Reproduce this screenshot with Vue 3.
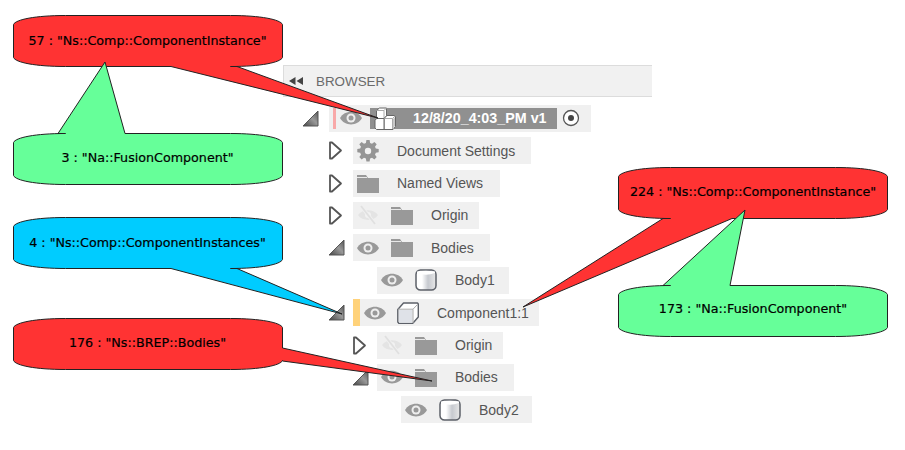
<script setup>
// callout outline, the tail is spliced in on the side it leaves from
function bubble(x, y, w, h, tail) {
  const r = x + w
  const b = y + h
  const top = tail.side === 'top' ? tail.pts.map((p) => `L${p}`).join(' ') : ''
  const right = tail.side === 'right' ? tail.pts.map((p) => `L${p}`).join(' ') : ''
  const bottom = tail.side === 'bottom' ? tail.pts.map((p) => `L${p}`).join(' ') : ''
  return `M${x},${y + 9} C${x + 2},${y + 4} ${x + 22},${y} ${x + 52},${y} ${top} L${r - 52},${y} C${r - 22},${y} ${r - 2},${y + 4} ${r},${y + 9} ${right} L${r},${b - 9} C${r - 2},${b - 4} ${r - 22},${b} ${r - 52},${b} ${bottom} L${x + 52},${b} C${x + 22},${b} ${x + 2},${b - 4} ${x},${b - 9} Z`
}

const callouts = [
  { d: bubble(13.5, 15.5, 269, 51, { side: 'bottom', pts: ['237,66.5', '378,118', '171,66.5'] }), fill: '#ff3333', label: '57 : "Ns::Comp::ComponentInstance"', x: 147.5, y: 45 },
  { d: bubble(13.5, 133.5, 269, 51, { side: 'top', pts: ['58,133.5', '105,62', '125,133.5'] }), fill: '#66ff99', label: '3 : "Na::FusionComponent"', x: 147.5, y: 162 },
  { d: bubble(13.5, 217.5, 269, 51, { side: 'bottom', pts: ['237,268.5', '342,314', '171,268.5'] }), fill: '#00ccff', label: '4 : "Ns::Comp::ComponentInstances"', x: 147.5, y: 247 },
  { d: bubble(13.5, 318.5, 269, 51, { side: 'right', pts: ['282.5,348', '432,381', '282.5,361'] }), fill: '#ff3333', label: '176 : "Ns::BREP::Bodies"', x: 147.5, y: 347 },
  { d: bubble(618.5, 167.5, 269, 51, { side: 'bottom', pts: ['732,218.5', '523,307', '663,218.5'] }), fill: '#ff3333', label: '224 : "Ns::Comp::ComponentInstance"', x: 753, y: 196 },
  { d: bubble(618.5, 285.5, 269, 51, { side: 'top', pts: ['663,285.5', '745,210', '730,285.5'] }), fill: '#66ff99', label: '173 : "Na::FusionComponent"', x: 753, y: 313 },
]

// pad = right padding of the row's grey box
const rows = [
  { depth: 1, toggle: 'closed', icon: 'gear', label: 'Document Settings', pad: 16 },
  { depth: 1, toggle: 'closed', icon: 'folder', label: 'Named Views', pad: 17 },
  { depth: 1, toggle: 'closed', eye: 'off', icon: 'folder', label: 'Origin', pad: 11 },
  { depth: 1, toggle: 'open', eye: 'on', icon: 'folder', label: 'Bodies', pad: 16 },
  { depth: 2, eye: 'on', icon: 'body', label: 'Body1', pad: 14 },
  { depth: 1, toggle: 'open', stripe: true, eye: 'on', icon: 'cube', label: 'Component1:1', pad: 10 },
  { depth: 2, toggle: 'closed', eye: 'off', icon: 'folder', label: 'Origin', pad: 11 },
  { depth: 2, toggle: 'open', eye: 'on', icon: 'folder', label: 'Bodies', pad: 16 },
  { depth: 3, eye: 'on', icon: 'body', label: 'Body2', pad: 13 },
]

const gearPath = 'M9.4,0 h3.2 l.5,2.9 l1.9,.8 l2.4,-1.7 l2.3,2.3 l-1.7,2.4 l.8,1.9 l2.9,.5 v3.2 l-2.9,.5 l-.8,1.9 l1.7,2.4 l-2.3,2.3 l-2.4,-1.7 l-1.9,.8 l-.5,2.9 h-3.2 l-.5,-2.9 l-1.9,-.8 l-2.4,1.7 l-2.3,-2.3 l1.7,-2.4 l-.8,-1.9 l-2.9,-.5 v-3.2 l2.9,-.5 l.8,-1.9 l-1.7,-2.4 l2.3,-2.3 l2.4,1.7 l1.9,-.8 Z'
</script>

<template>
  <div class="page">
    <section class="browser">
      <header class="browser-head">
        <svg class="collapse" width="14" height="8" viewBox="0 0 14 8"><path d="M6.500 0v8L0 4ZM14 0v8L7.500 4Z" fill="#444" /></svg>
        <span>BROWSER</span>
      </header>

      <div class="tree">
        <div class="row root-row">
          <span class="slot root-slot">
            <svg width="17" height="17" viewBox="0 0 17 17"><use href="#tri-open" /></svg>
          </span>
          <div class="pill root-pill">
            <i class="root-stripe"></i>
            <svg class="ico" width="22" height="14" viewBox="0 0 22 14"><use href="#eye" /></svg>
            <div class="root-title">
              <svg class="ico" width="22" height="23" viewBox="0 0 22 23">
                <path d="M2.500 3.500 5.500 1H12.500V9L10 11.500H2.500Z" fill="#fff" stroke="#666" stroke-linejoin="round" />
                <path d="M2.500 3.500H10L12.500 1M10 3.500V11.500" fill="none" stroke="#aaa" />
                <path d="M10 11.500 13 8.500H20.500L21.500 10V19.500L19 22.500H10Z" fill="#fff" stroke="#666" stroke-linejoin="round" />
                <path d="M10 11.500H18.500L21 9M18.500 11.500V22" fill="none" stroke="#aaa" />
                <path d="M19 12 21 10V19L19 22Z" fill="#c8c8c8" />
                <path d="M1 13.500 2.500 11.500H10V22.500H2.500L1 21Z" fill="#fff" stroke="#666" stroke-linejoin="round" />
              </svg>
              <span class="root-text">12/8/20_4:03_PM v1</span>
            </div>
            <svg class="radio" width="18" height="18" viewBox="0 0 18 18">
              <circle cx="9" cy="9" r="7.500" fill="#fff" stroke="#555" stroke-width="1.300" />
              <circle cx="9" cy="9" r="3" fill="#444" />
            </svg>
          </div>
        </div>

        <div v-for="row in rows" :key="row.label + row.depth" class="row" :class="'depth-' + row.depth">
          <span class="slot">
            <svg v-if="row.toggle === 'open'" width="17" height="17" viewBox="0 0 17 17"><use href="#tri-open" /></svg>
            <svg v-else-if="row.toggle === 'closed'" width="15" height="19" viewBox="0 0 15 19"><path d="M2 1.500h2L13 9.500 4 17.500H2Z" fill="#fff" stroke="#555" stroke-width="1.800" stroke-linejoin="round" /></svg>
          </span>
          <div class="pill" :class="{ 'has-stripe': row.stripe }" :style="{ paddingRight: row.pad + 'px' }">
            <i v-if="row.stripe" class="stripe"></i>
            <svg v-if="row.eye === 'on'" class="ico" width="22" height="14" viewBox="0 0 22 14"><use href="#eye" /></svg>
            <svg v-else-if="row.eye === 'off'" class="ico" width="22" height="20" viewBox="0 0 22 20">
              <path d="M1 10C5 3.500 17 3.500 21 10 17 16.500 5 16.500 1 10Z" fill="#e4e4e4" />
              <circle cx="11" cy="10" r="3" fill="#f2f2f2" />
              <path d="M4 1 18 19" stroke="#f0f0f0" stroke-width="3.500" />
              <path d="M4 1 18 19" stroke="#e0e0e0" stroke-width="1.800" />
            </svg>
            <svg v-if="row.icon === 'gear'" class="ico" width="22" height="22" viewBox="0 0 22 22">
              <path :d="gearPath" fill="#959595" />
              <circle cx="11" cy="11" r="3.200" fill="#f0f0f0" />
            </svg>
            <svg v-else-if="row.icon === 'folder'" class="ico" width="22" height="19" viewBox="0 0 22 19"><path d="M0 1h9l2 3h11v15H0Z" fill="#999" /><path d="M0 3.500h10" stroke="#e8e8e8" /></svg>
            <svg v-else-if="row.icon === 'body'" class="ico" width="22" height="22" viewBox="0 0 22 22">
              <defs>
                <linearGradient id="body-fill" x1="0" x2="1" y1="0" y2="0"><stop offset="0" stop-color="#fff" /><stop offset=".3" stop-color="#fff" /><stop offset=".6" stop-color="#c6c9cf" /><stop offset="1" stop-color="#e8e8e8" /></linearGradient>
              </defs>
              <rect x="1" y="1" width="20" height="20" rx="4.500" fill="url(#body-fill)" stroke="#5c6068" stroke-width="1.500" />
              <path d="M2 4Q11 7.500 20 4V2.500Q11 1 2 2.500Z" fill="#fff" />
            </svg>
            <svg v-else-if="row.icon === 'cube'" class="ico" width="22" height="22" viewBox="0 0 22 22">
              <path d="M6.500 1H20.500L21.300 2V15l-4.800 5.500-1 1H2L.8 20V7.500Z" fill="#fff" stroke="#5c6068" stroke-width="1.400" stroke-linejoin="round" />
              <path d="M2 8H15.500V20.500H2Z" fill="#dfe2e8" />
              <path d="M1 7.200H16l4.800-5M16 7.200V21" fill="none" stroke="#aaa" />
            </svg>
            <span class="label">{{ row.label }}</span>
          </div>
        </div>
      </div>
    </section>

    <svg class="callouts" width="905" height="450" viewBox="0 0 905 450">
      <g v-for="c in callouts" :key="c.label">
        <path :d="c.d" :fill="c.fill" stroke="#222" stroke-width="1" stroke-linejoin="miter" />
        <text :x="c.x" :y="c.y" text-anchor="middle">{{ c.label }}</text>
      </g>
    </svg>

    <svg class="defs" width="0" height="0">
      <defs>
        <linearGradient id="tri-fill" x1="0" x2="1" y1="1" y2="0"><stop offset="0" stop-color="#444" /><stop offset=".55" stop-color="#999" /><stop offset="1" stop-color="#555" /></linearGradient>
        <symbol id="tri-open" viewBox="0 0 17 17"><path d="M16 1v15H1Z" fill="url(#tri-fill)" stroke="#555" stroke-linejoin="round" /></symbol>
        <symbol id="eye" viewBox="0 0 22 14">
          <path d="M0 7C4.500 -1.500 17.500 -1.500 22 7 17.500 15.500 4.500 15.500 0 7Z" fill="#999" />
          <circle cx="11" cy="7" r="4.500" fill="#eee" />
          <circle cx="11" cy="7" r="2.500" fill="#999" />
        </symbol>
      </defs>
    </svg>
  </div>
</template>

<style scoped>
.page {
  position: relative;
  width: 905px;
  height: 450px;
  overflow: hidden;
  background: #fff;
  font-family: "Liberation Sans", Arial, sans-serif;
}
.browser {
  width: 369px;
  margin-left: 283px;
  padding-top: 65px;
}
.browser-head {
  display: flex;
  align-items: center;
  gap: 13px;
  height: 30px;
  padding-left: 5px;
  background: #f1f1f1;
  border: 1px solid #dcdcdc;
  border-right: none;
  color: #6a6a6a;
  font-size: 13.4px;
}
.tree {
  display: flex;
  flex-direction: column;
  gap: 5.4px;
  padding-top: 7.8px;
}
.row {
  display: flex;
  align-items: center;
  height: 27px;
}
.root-row { margin-left: 20px; }
.depth-1 { margin-left: 46px; }
.depth-2 { margin-left: 70px; }
.depth-3 { margin-left: 94px; }
.slot {
  flex: none;
  display: flex;
  align-items: center;
  width: 24px;
  margin-left: -1px;
  margin-right: 1px;
}
.root-slot { width: 26px; }
.pill {
  display: flex;
  align-items: center;
  gap: 12px;
  height: 27px;
  padding: 0 15px 0 4px;
  background: #f0f0f0;
}
.has-stripe { gap: 11px; }
.has-stripe .label { margin-left: 7px; }
.ico { flex: none; display: block; }
.stripe {
  flex: none;
  align-self: stretch;
  width: 7px;
  margin: 0 -7px 0 -4px;
  background: #ffd27a;
}
.label {
  margin-left: 6px;
  color: #555;
  font-size: 14px;
  white-space: nowrap;
}
.root-pill { padding-right: 11px; gap: 0; }
.root-stripe {
  flex: none;
  width: 3px;
  height: 21px;
  margin-right: 4px;
  background: #f8a8a8;
}
.root-title {
  display: flex;
  align-items: center;
  gap: 17px;
  height: 21px;
  margin-left: 8px;
  padding: 0 10px 0 4px;
  background: #909090;
}
.root-text {
  color: #fff;
  font-size: 14.3px;
  font-weight: bold;
  white-space: nowrap;
}
.radio { flex: none; margin-left: 5px; }
.callouts {
  position: absolute;
  left: 0;
  top: 0;
}
.callouts text {
  font-family: "DejaVu Sans", Verdana, sans-serif;
  font-size: 12.7px;
  fill: #000;
  stroke: #000;
  stroke-width: 0.2px;
}
.defs { position: absolute; }
</style>
<style>
html, body { background: #fff; }
</style>
